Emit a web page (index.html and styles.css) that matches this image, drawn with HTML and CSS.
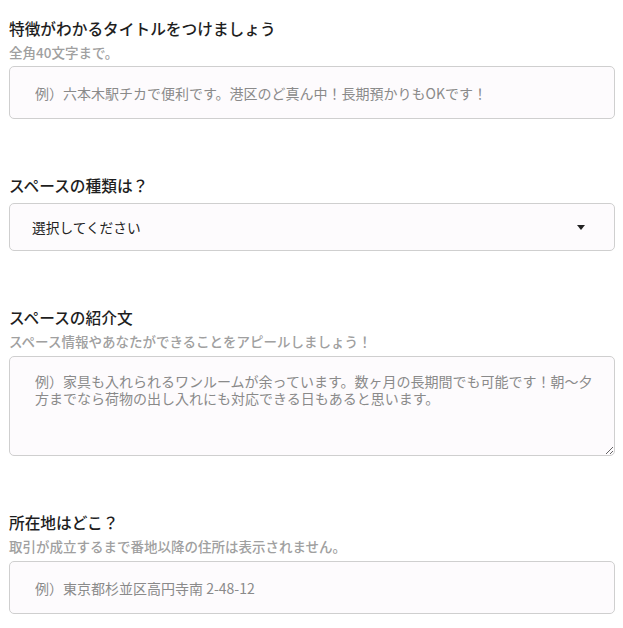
FILE: index.html
```html
<!DOCTYPE html>
<html lang="ja">
<head>
<meta charset="utf-8">
<link rel="stylesheet" href="styles.css">
</head>
<body>
<form class="form">
  <div class="field">
    <label class="label">特徴がわかるタイトルをつけましょう</label>
    <p class="note">全角40文字まで。</p>
    <input class="input" type="text" placeholder="例）六本木駅チカで便利です。港区のど真ん中！長期預かりもOKです！">
  </div>
  <div class="field">
    <label class="label">スペースの種類は？</label>
    <div class="select">
      <span class="select-text">選択してください</span>
      <svg class="caret" width="8" height="5" viewBox="0 0 8 5"><path d="M0 0H8L4 5Z" fill="#222"/></svg>
    </div>
  </div>
  <div class="field">
    <label class="label">スペースの紹介文</label>
    <p class="note">スペース情報やあなたができることをアピールしましょう！</p>
    <textarea class="textarea" placeholder="例）家具も入れられるワンルームが余っています。数ヶ月の長期間でも可能です！朝〜夕方までなら荷物の出し入れにも対応できる日もあると思います。"></textarea>
  </div>
  <div class="field">
    <label class="label">所在地はどこ？</label>
    <p class="note">取引が成立するまで番地以降の住所は表示されません。</p>
    <input class="input input-last" type="text" placeholder="例）東京都杉並区高円寺南 2-48-12">
  </div>
</form>
</body>
</html>
```

FILE: styles.css
```css
html, body {
  margin: 0;
  padding: 0;
  background: #ffffff;
}
body {
  font-family: "Noto Sans CJK JP", "Noto Sans", sans-serif;
  color: #222;
}
.form {
  display: flex;
  flex-direction: column;
  gap: 56px;
  padding: 18px 8px 0 9px;
}
.field {
  display: flex;
  flex-direction: column;
}
.label {
  font-size: 15.7px;
  line-height: 22px;
  font-weight: 500;
  color: #1e1e1e;
}
.note {
  margin: 3px 0 0;
  font-size: 13.5px;
  line-height: 19px;
  font-weight: 500;
  color: #a0a0a0;
}
.input, .textarea, .select {
  box-sizing: border-box;
  width: 100%;
  margin-top: 4px;
  border: 1px solid #cfcfcf;
  border-radius: 5px;
  background: #fdfbfd;
  font-family: "Noto Sans CJK JP", "Noto Sans", sans-serif;
  font-size: 14px;
  color: #333;
}
.input {
  height: 53px;
  padding: 0 25px;
  outline: none;
}
.input-last {
  margin-top: 5px;
}
.input::placeholder, .textarea::placeholder {
  color: #8a8a8a;
}
.select {
  height: 48px;
  margin-top: 6px;
  display: flex;
  align-items: center;
  justify-content: space-between;
  padding: 0 29px 0 22px;
}
.select-text {
  font-size: 13.7px;
  color: #222;
}
.caret {
  display: block;
}
.textarea {
  height: 100px;
  margin-top: 5px;
  padding: 16px 12px 16px 25px;
  line-height: 17px;
  resize: vertical;
  outline: none;
}
```
